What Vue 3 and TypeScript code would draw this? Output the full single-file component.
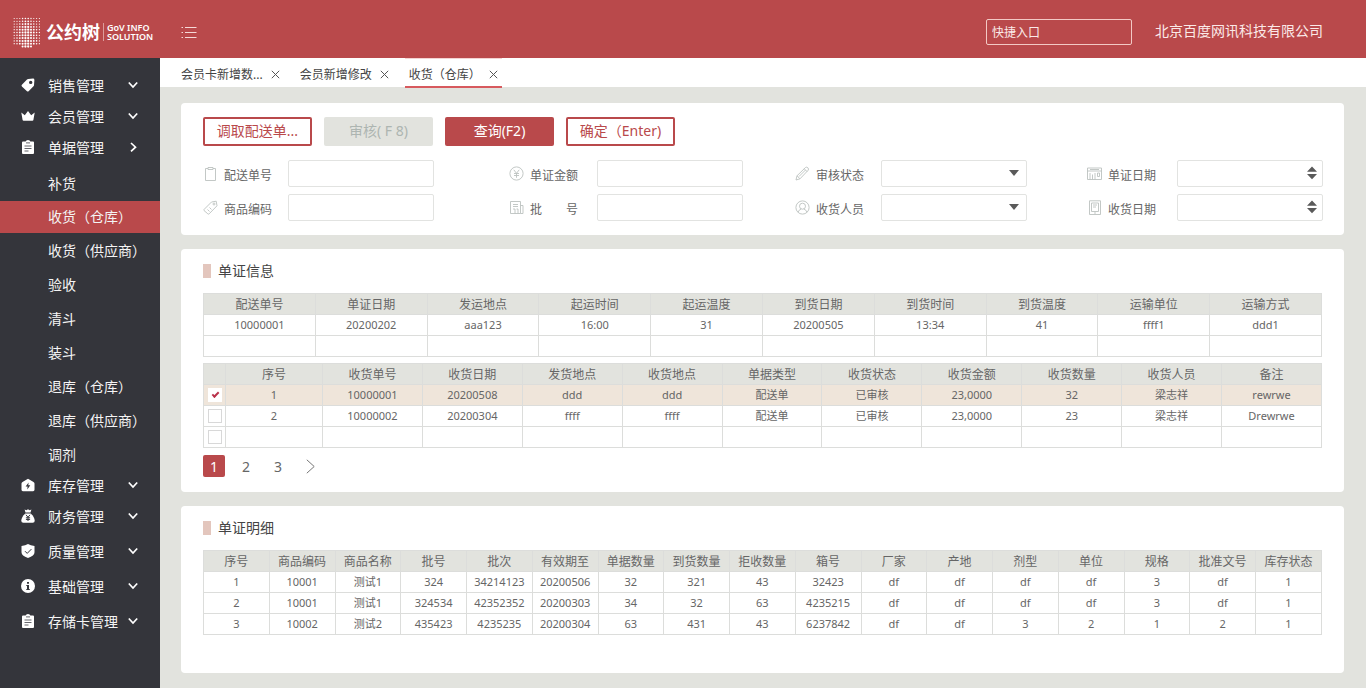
<script setup lang="ts">
import { ref } from 'vue'

interface MenuItem {
  label: string
  icon: string
  compact?: boolean
  low?: boolean
  children?: string[]
}

const menu: MenuItem[] = [
  { label: '销售管理', icon: 'tag', compact: true },
  { label: '会员管理', icon: 'crown', compact: true },
  {
    label: '单据管理',
    icon: 'clipboard',
    compact: true,
    children: ['补货', '收货（仓库）', '收货（供应商）', '验收', '清斗', '装斗', '退库（仓库）', '退库（供应商）', '调剂'],
  },
  { label: '库存管理', icon: 'house', low: true },
  { label: '财务管理', icon: 'bag' },
  { label: '质量管理', icon: 'shield' },
  { label: '基础管理', icon: 'info' },
  { label: '存储卡管理', icon: 'clipboard' },
]
const currentPage = ref('收货（仓库）')

const tabs = ['会员卡新增数...', '会员新增修改', '收货（仓库）']
const currentTab = ref(2)

interface Field {
  id: string
  label: string
  icon: string
  kind: 'text' | 'select' | 'date'
}
const fieldColumns: Field[][] = [
  [
    { id: 'delivery-no', label: '配送单号', icon: 'board', kind: 'text' },
    { id: 'goods-code', label: '商品编码', icon: 'label', kind: 'text' },
  ],
  [
    { id: 'amount', label: '单证金额', icon: 'yen', kind: 'text' },
    { id: 'batch', label: '批\u3000\u3000号', icon: 'news', kind: 'text' },
  ],
  [
    { id: 'status', label: '审核状态', icon: 'pencil', kind: 'select' },
    { id: 'receiver', label: '收货人员', icon: 'user', kind: 'select' },
  ],
  [
    { id: 'doc-date', label: '单证日期', icon: 'calendar', kind: 'date' },
    { id: 'receive-date', label: '收货日期', icon: 'pad', kind: 'date' },
  ],
]

const infoHead = ['配送单号', '单证日期', '发运地点', '起运时间', '起运温度', '到货日期', '到货时间', '到货温度', '运输单位', '运输方式']
const infoRows = [
  ['10000001', '20200202', 'aaa123', '16:00', '31', '20200505', '13:34', '41', 'ffff1', 'ddd1'],
  Array(10).fill('') as string[],
]

const receiptHead = ['序号', '收货单号', '收货日期', '发货地点', '收货地点', '单据类型', '收货状态', '收货金额', '收货数量', '收货人员', '备注']
const receiptRows = ref([
  { checked: true, cells: ['1', '10000001', '20200508', 'ddd', 'ddd', '配送单', '已审核', '23,0000', '32', '梁志祥', 'rewrwe'] },
  { checked: false, cells: ['2', '10000002', '20200304', 'ffff', 'ffff', '配送单', '已审核', '23,0000', '23', '梁志祥', 'Drewrwe'] },
  { checked: false, cells: Array(11).fill('') as string[] },
])
const page = ref(1)

const detailHead = ['序号', '商品编码', '商品名称', '批号', '批次', '有效期至', '单据数量', '到货数量', '拒收数量', '箱号', '厂家', '产地', '剂型', '单位', '规格', '批准文号', '库存状态']
const detailRows = [
  ['1', '10001', '测试1', '324', '34214123', '20200506', '32', '321', '43', '32423', 'df', 'df', 'df', 'df', '3', 'df', '1'],
  ['2', '10001', '测试1', '324534', '42352352', '20200303', '34', '32', '63', '4235215', 'df', 'df', 'df', 'df', '3', 'df', '1'],
  ['3', '10002', '测试2', '435423', '4235235', '20200304', '63', '431', '43', '6237842', 'df', 'df', '3', '2', '1', '2', '1'],
]

// Halftone logo: dots grow towards the middle columns and the lower rows.
const dots: { x: number; y: number; r: number }[] = []
for (let row = 0; row < 11; row++) {
  for (let col = 0; col < 10; col++) {
    const off = Math.abs(col - 4.5)
    if (row === 10 && off > 2) continue
    dots.push({
      x: 1.2 + col * 2.8,
      y: 1.5 + row * 2.8,
      r: Math.max(0.6, 1.2 - off * 0.12 - Math.max(0, 4 - row) * 0.08),
    })
  }
}
</script>

<template>
  <div class="app">
    <header class="topbar">
      <div class="brand">
        <svg class="brand-mark" width="28" height="31" viewBox="0 0 28 31" aria-hidden="true">
          <circle v-for="(d, i) in dots" :key="i" :cx="d.x" :cy="d.y" :r="d.r" fill="#fff" />
        </svg>
        <strong class="brand-name">公约树</strong>
        <span class="brand-sub"><span>GoV INFO</span><span>SOLUTION</span></span>
      </div>
      <button class="burger" type="button" aria-label="菜单">
        <svg width="16" height="12" viewBox="0 0 16 12" stroke="#f6d9d8" fill="none">
          <path d="M4 1.500h11.500M4 6.500h11.500M4 11.500h11.500" />
          <path d="M.5 1.500h1.500M.5 6.500h1.500M.5 11.500h1.500" />
        </svg>
      </button>
      <input class="quick" type="text" placeholder="快捷入口" aria-label="快捷入口" />
      <span class="company">北京百度网讯科技有限公司</span>
    </header>

    <div class="body">
      <nav class="sidebar">
        <template v-for="item in menu" :key="item.label">
          <button type="button" class="menu-item" :class="{ compact: item.compact, low: item.low }">
            <svg class="menu-icon" width="14" height="14" viewBox="0 0 14 14" fill="#fff" aria-hidden="true">
              <path v-if="item.icon === 'tag'" fill-rule="evenodd" d="M7.200 1 12 .6q1.400 0 1.400 1.400L13 7.300q0 .6-.5 1L7.600 13.200q-.8.700-1.600 0L.9 8.400q-.8-.8 0-1.600L6 1.600q.5-.6 1.200-.6ZM9.700 2.700a1.700 1.700 0 1 0 0 3.400 1.700 1.700 0 0 0 0-3.400Z" />
              <path v-else-if="item.icon === 'crown'" d="M.3 3.500 3.800 6.200 7 2l3.200 4.200 3.500-2.700-1.300 7.500q-.2.800-1 .8H2.600q-.8 0-1-.8Z" />
              <g v-else-if="item.icon === 'clipboard'">
                <path d="M2 1.500h2.600Q5 0 7 0t2.400 1.500H12q1 0 1 1V13q0 1-1 1H2q-1 0-1-1V2.500q0-1 1-1Z" />
                <path d="M5 2.900h4M3.500 6h7M3.500 8.500h7M3.500 11h4" stroke="#55565c" fill="none" stroke-width=".9" />
              </g>
              <g v-else-if="item.icon === 'house'">
                <path d="M7 .8 12.500 4q1 .6 1 1.600v6.200q0 1.400-1.400 1.400H1.900q-1.400 0-1.400-1.400V5.600Q.5 4.600 1.500 4Z" />
                <path d="M7.600 4.500 4.600 8.600h2l-.3 2.800 3-4.100h-2Z" fill="#34353b" />
              </g>
              <g v-else-if="item.icon === 'bag'">
                <path d="M3.600.5 5.300 1.200 7 .3l1.700.9 1.700-.7-.9 3H4.500Z" />
                <path d="M4.300 4.400h5.400q4 3.600 4 7.400 0 2-2 2H2.300q-2 0-2-2 0-3.800 4-7.400Z" />
                <path d="m5 5.800 2 2.500 2-2.500M7 8.300V12M4.900 8.800h4.200M4.900 10.400h4.200" stroke="#34353b" fill="none" />
              </g>
              <g v-else-if="item.icon === 'shield'">
                <path d="M7 0q2.500 1.600 6.500 2v6.200q0 3.600-6.500 5.800Q.5 11.800.5 8.200V2Q4.500 1.600 7 0Z" />
                <path d="m4 7.200 2.200 2.200 4.200-4.300" stroke="#34353b" fill="none" />
              </g>
              <g v-else>
                <circle cx="7" cy="7" r="7" />
                <path d="M6 3h2v1.800H6ZM5.300 6H8v4h.8v1H5.300v-1H6V7h-.7Z" fill="#34353b" />
              </g>
            </svg>
            <span>{{ item.label }}</span>
            <svg class="menu-arrow" width="10" height="10" viewBox="0 0 10 10" fill="none" stroke="#fff" stroke-width="1.700" aria-hidden="true">
              <path :d="item.children ? 'M3 1l4.500 4.200L3 9.400' : 'M.8 2.500 5 7l4.200-4.500'" />
            </svg>
          </button>
          <ul v-if="item.children" class="submenu">
            <li v-for="child in item.children" :key="child">
              <a href="#" :class="{ active: child === currentPage }" @click.prevent="currentPage = child">{{ child }}</a>
            </li>
          </ul>
        </template>
      </nav>

      <div class="content">
        <div class="tabs">
          <div v-for="(tab, i) in tabs" :key="tab" class="tab" :class="{ active: i === currentTab }">
            <button type="button" class="tab-label" @click="currentTab = i">{{ tab }}</button>
            <button type="button" class="tab-close" aria-label="关闭">
              <svg width="9" height="9" viewBox="0 0 9 9" stroke="#555" fill="none"><path d="m.8.8 7.400 7.400M8.200.8.8 8.200" /></svg>
            </button>
          </div>
        </div>

        <main class="main">
          <section class="card filters">
            <div class="actions">
              <button type="button" class="btn outline">调取配送单...</button>
              <button type="button" class="btn" disabled>审核( F 8)</button>
              <button type="button" class="btn solid">查询(F2)</button>
              <button type="button" class="btn outline">确定（Enter)</button>
            </div>
            <form class="fields" @submit.prevent>
              <div v-for="(column, c) in fieldColumns" :key="c" class="field-col">
                <div v-for="f in column" :key="f.id" class="field">
                  <svg class="field-icon" width="15" height="15" viewBox="0 0 15 15" fill="none" stroke="#bcc2bf" stroke-width=".9" aria-hidden="true">
                    <path v-if="f.icon === 'board'" d="M5 2.500H2.500v12h10v-12H10M5 1.500h5v2H5Z" />
                    <g v-else-if="f.icon === 'label'">
                      <path d="M1 9.500 8.500 2l4.700-.8.800 4.600-7.800 8q-.7.700-1.400 0L1 10.500q-.5-.5 0-1Z" />
                      <circle cx="11" cy="4" r="1" />
                      <path d="m4.500 9.500 2 2M6.500 7.500l2 2" />
                    </g>
                    <g v-else-if="f.icon === 'yen'">
                      <circle cx="7.500" cy="7.500" r="6.600" />
                      <path d="m4.800 3.800 2.700 3.500 2.700-3.500M7.500 7.300v4.500M5 7.500h5M5 9.500h5" />
                    </g>
                    <g v-else-if="f.icon === 'news'">
                      <path d="M1.500 1.500h10v12h-10ZM11.500 5.500H14v8h-2.500M4 4.500h5M4 6.500h5" />
                      <path d="M4 9h2v4.500M9 13.500V9H7.500" />
                    </g>
                    <g v-else-if="f.icon === 'pencil'">
                      <path d="m1 14 1-4.200L10.500 1.500q1.300-.9 2.400.3t.3 2.400L5 12.800ZM2 9.800l3 3M9.300 2.800l2.900 2.900M4 10.500 10.500 4" />
                    </g>
                    <g v-else-if="f.icon === 'user'">
                      <circle cx="7.500" cy="7.500" r="6.600" />
                      <circle cx="7.500" cy="6.200" r="3" />
                      <path d="M3 12.200q.8-2.400 3.200-3.200M12 12.200q-.8-2.400-3.200-3.200" />
                    </g>
                    <g v-else-if="f.icon === 'calendar'">
                      <path d="M.5 2h14v11.500H.5ZM.5 5h14M3 3.500h9" />
                      <path d="M3 7v6.500M5.500 8.500v5M8 7v6.500M10.500 7v3.500h2V7Z" />
                    </g>
                    <g v-else>
                      <path d="M2.500.8h11v13.700h-11ZM4.500 3h7v8.500h-7ZM6 5h4M6 7h3M7 13h2" />
                    </g>
                  </svg>
                  <label :for="f.id">{{ f.label }}</label>
                  <div class="control">
                    <select v-if="f.kind === 'select'" :id="f.id"></select>
                    <input v-else :id="f.id" type="text" />
                    <svg v-if="f.kind === 'select'" class="glyph drop" width="10" height="6" viewBox="0 0 10 6" fill="#5a5a5a"><path d="M0 0h10L5 6Z" /></svg>
                    <svg v-if="f.kind === 'date'" class="glyph spin" width="10" height="14" viewBox="0 0 10 14" fill="#5a5a5a"><path d="M0 5.700h10L5 .5ZM0 8h10L5 13.200Z" /></svg>
                  </div>
                </div>
              </div>
            </form>
          </section>

          <section class="card info">
            <h2>单证信息</h2>
            <table>
              <thead>
                <tr><th v-for="h in infoHead" :key="h">{{ h }}</th></tr>
              </thead>
              <tbody>
                <tr v-for="(row, r) in infoRows" :key="r"><td v-for="(cell, c) in row" :key="c">{{ cell }}</td></tr>
              </tbody>
            </table>
            <table class="receipts">
              <colgroup><col class="col-check" /><col class="col-index" /></colgroup>
              <thead>
                <tr><th></th><th v-for="h in receiptHead" :key="h">{{ h }}</th></tr>
              </thead>
              <tbody>
                <tr v-for="(row, r) in receiptRows" :key="r" :class="{ selected: row.checked }">
                  <td><input v-model="row.checked" type="checkbox" :aria-label="'选择第' + (r + 1) + '行'" /></td>
                  <td v-for="(cell, c) in row.cells" :key="c">{{ cell }}</td>
                </tr>
              </tbody>
            </table>
            <div class="pager">
              <button v-for="n in 3" :key="n" type="button" :class="{ current: n === page }" @click="page = n">{{ n }}</button>
              <button type="button" aria-label="下一页">
                <svg width="9" height="15" viewBox="0 0 9 15" fill="none" stroke="#777"><path d="m.8.8 7.400 6.700L.8 14.200" /></svg>
              </button>
            </div>
          </section>

          <section class="card detail">
            <h2>单证明细</h2>
            <table>
              <thead>
                <tr><th v-for="h in detailHead" :key="h">{{ h }}</th></tr>
              </thead>
              <tbody>
                <tr v-for="(row, r) in detailRows" :key="r"><td v-for="(cell, c) in row" :key="c">{{ cell }}</td></tr>
              </tbody>
            </table>
          </section>
        </main>
      </div>
    </div>
  </div>
</template>

<style>
body {
  margin: 0;
  background: #e2e3de;
}
</style>

<style scoped>
.app {
  display: flex;
  flex-direction: column;
  min-height: 100vh;
  font-family: "Noto Sans", "Noto Sans CJK SC", sans-serif;
  font-size: 12px;
  color: #666;
}
.app *,
.app *::before {
  box-sizing: border-box;
}
button,
input,
select {
  font: inherit;
  color: inherit;
}
button {
  padding: 0;
  border: 0;
  background: none;
  cursor: pointer;
}
svg {
  display: block;
  flex: none;
}

.topbar {
  display: flex;
  align-items: center;
  height: 58px;
  padding: 6px 43px 0 13px;
  background: #b9494b;
  color: #fff;
}
.brand {
  display: flex;
  align-items: center;
  width: 168px;
}
.brand-name {
  margin-left: 5px;
  font-size: 18px;
  line-height: 20px;
}
.brand-sub {
  display: flex;
  flex-direction: column;
  margin-left: 3px;
  padding-left: 3px;
  border-left: 1px solid #dc9c9b;
  font-size: 9px;
  font-weight: 600;
  white-space: nowrap;
}
.brand-sub span {
  line-height: 9px;
}
.quick {
  width: 146px;
  height: 26px;
  margin-left: auto;
  padding: 0 5px;
  border: 1px solid #f3c9c5;
  border-radius: 2px;
  background: transparent;
  color: #fff;
}
.quick::placeholder {
  color: #fbe9e8;
  opacity: 1;
}
.company {
  margin-left: 23px;
  padding-bottom: 2px;
  font-size: 14px;
  line-height: 20px;
  color: #fbe9e8;
}

.body {
  display: flex;
  flex: 1;
}
.sidebar {
  flex: none;
  width: 160px;
  padding-top: 11px;
  background: #34353b;
  color: #f4f4f4;
  font-size: 14px;
}
.menu-item {
  display: flex;
  align-items: center;
  width: 100%;
  height: 35px;
  padding: 0 22px 0 21px;
}
.menu-item.compact {
  height: 31px;
}
.menu-item.low {
  height: 26px;
}
.menu-icon {
  margin-right: 13px;
}
.menu-arrow {
  margin-left: auto;
}
.submenu {
  margin: 0;
  padding: 5px 0 0;
  list-style: none;
}
.submenu a {
  display: block;
  padding-left: 48px;
  line-height: 34px;
  color: inherit;
  text-decoration: none;
  white-space: nowrap;
}
.submenu a.active {
  margin-bottom: 1px;
  background: #b9494b;
  line-height: 32px;
}

.content {
  display: flex;
  flex: 1;
  flex-direction: column;
  min-width: 0;
}
.tabs {
  display: flex;
  gap: 12px;
  height: 29px;
  padding-left: 17px;
  background: #fff;
  color: #444;
}
.tab {
  display: flex;
  align-items: center;
  gap: 8px;
  height: 30px;
  padding: 3px 4px 0;
  border-top: 1px solid transparent;
  border-bottom: 2px solid transparent;
}
.tab.active {
  border-top-color: #f3d3d2;
  border-bottom-color: #d75a5e;
}
.main {
  display: flex;
  flex: 1;
  flex-direction: column;
  gap: 14px;
  padding: 16px 22px 15px 21px;
}
.card {
  padding: 12px 22px;
  border-radius: 4px;
  background: #fff;
}
.filters {
  padding: 14px 21px 14px 22px;
}
.info {
  padding-bottom: 15px;
}
.detail {
  flex: 1;
  padding-bottom: 38px;
}

.actions {
  display: flex;
  gap: 12px;
}
.btn {
  width: 109px;
  height: 29px;
  padding-bottom: 2px;
  border-radius: 2px;
  font-size: 14px;
  line-height: 20px;
}
.btn.outline {
  border: 2px solid #b9494b;
  color: #b9494b;
}
.btn.solid {
  background: #b9494b;
  color: #fff;
}
.btn:disabled {
  background: #e2e3de;
  color: #adb5b1;
  cursor: default;
}

.fields {
  display: grid;
  grid-template-columns: 231px 75fr 234px 52fr 232px 60fr 236px;
  margin-top: 14px;
}
.field-col {
  display: grid;
  gap: 7px;
}
.field-col:nth-child(2) {
  grid-column: 3;
}
.field-col:nth-child(3) {
  grid-column: 5;
}
.field-col:nth-child(4) {
  grid-column: 7;
}
.field {
  display: flex;
  align-items: center;
  height: 27px;
}
.field label {
  flex: 1;
  padding: 2px 0 0 6px;
  white-space: pre;
}
.control {
  position: relative;
  width: 146px;
  height: 27px;
}
.control input,
.control select {
  width: 100%;
  height: 100%;
  padding: 0 24px 0 8px;
  border: 1px solid #e2e3e1;
  border-radius: 2px;
  background: #fff;
  appearance: none;
}
.glyph {
  position: absolute;
  pointer-events: none;
}
.drop {
  top: 10px;
  right: 8px;
}
.spin {
  top: 6px;
  right: 6px;
}

h2 {
  display: flex;
  align-items: center;
  gap: 7px;
  margin: 0 0 12px;
  font-size: 14px;
  font-weight: 400;
  line-height: 20px;
  color: #444;
}
h2::before {
  content: "";
  width: 8px;
  height: 14px;
  background: #e3c6bd;
}
table {
  width: 100%;
  table-layout: fixed;
  border-collapse: collapse;
  text-align: center;
}
th,
td {
  height: 21px;
  padding: 0;
  border: 1px solid #dcdddb;
  line-height: 18px;
  white-space: nowrap;
}
th {
  padding-top: 2px;
  background: #e2e3de;
  font-size: 12px;
  font-weight: 400;
}
td {
  font-size: 11px;
}
.receipts {
  margin-top: 6px;
}
.col-check {
  width: 22px;
}
.col-index {
  width: 97px;
}
.selected td {
  background: #efe5da;
}
td input {
  display: block;
  width: 14px;
  height: 14px;
  margin: 0 auto;
  border: 1px solid #d8d8d8;
  background: #fff;
  appearance: none;
}
td input:checked {
  border-color: #fff;
}
td input:checked::before {
  content: "";
  display: block;
  width: 7px;
  height: 4px;
  margin: 3px 0 0 3px;
  border: solid #b9324a;
  border-width: 0 0 2px 2px;
  transform: rotate(-45deg);
}
.pager {
  display: flex;
  gap: 10px;
  margin-top: 7px;
}
.pager button {
  display: flex;
  align-items: center;
  justify-content: center;
  width: 22px;
  height: 22px;
  border-radius: 2px;
  font-size: 14px;
}
.pager .current {
  background: #b9494b;
  color: #fff;
}
</style>
